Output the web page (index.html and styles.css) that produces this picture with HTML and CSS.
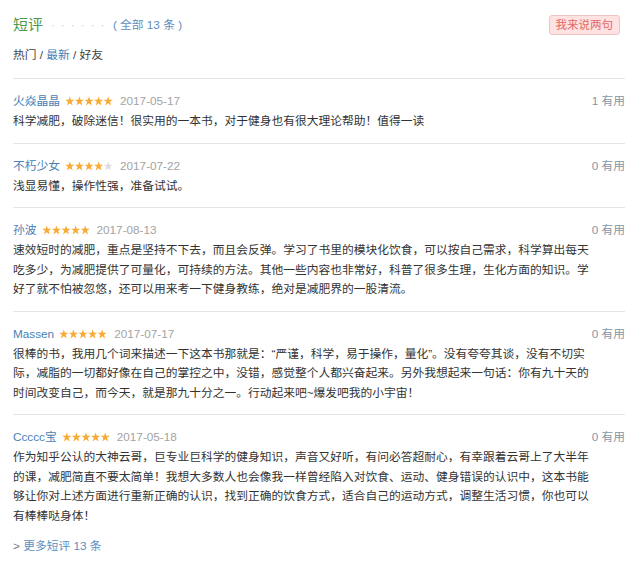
FILE: index.html
```html
<!DOCTYPE html>
<html lang="zh-CN">
<head>
<meta charset="utf-8">
<title>短评</title>
<link rel="stylesheet" href="styles.css">
</head>
<body>
<svg class="defs" width="0" height="0" aria-hidden="true">
  <symbol id="star" viewBox="0 0 10 10">
    <polygon points="5,0.3 6.2,3.7 9.8,3.7 6.9,5.9 8,9.6 5,7.4 2,9.6 3.1,5.9 0.2,3.7 3.8,3.7"/>
  </symbol>
</svg>
<section class="comments">
  <div class="section-head">
    <h2 class="title">短评<span class="dots">· · · · · ·</span><a class="all" href="#">( 全部 13 条 )</a></h2>
    <a class="say" href="#">我来说两句</a>
  </div>
  <div class="tabs"><span class="tab-active">热门</span> / <a href="#">最新</a> / <span>好友</span></div>

  <ul class="list">
    <li class="item">
      <div class="meta">
        <a class="name" href="#">火焱晶晶</a>
        <svg class="stars" viewBox="0 0 48 10"><use href="#star" x="0" width="9.6" height="10"/><use href="#star" x="9.6" width="9.6" height="10"/><use href="#star" x="19.2" width="9.6" height="10"/><use href="#star" x="28.8" width="9.6" height="10"/><use href="#star" x="38.4" width="9.6" height="10"/></svg>
        <span class="date">2017-05-17</span>
        <span class="votes">1 有用</span>
      </div>
      <p class="text">科学减肥，破除迷信！很实用的一本书，对于健身也有很大理论帮助！值得一读</p>
    </li>
    <li class="item">
      <div class="meta">
        <a class="name" href="#">不朽少女</a>
        <svg class="stars" viewBox="0 0 48 10"><use href="#star" x="0" width="9.6" height="10"/><use href="#star" x="9.6" width="9.6" height="10"/><use href="#star" x="19.2" width="9.6" height="10"/><use href="#star" x="28.8" width="9.6" height="10"/><use class="off" href="#star" x="38.4" width="9.6" height="10"/></svg>
        <span class="date">2017-07-22</span>
        <span class="votes">0 有用</span>
      </div>
      <p class="text">浅显易懂，操作性强，准备试试。</p>
    </li>
    <li class="item">
      <div class="meta">
        <a class="name" href="#">孙波</a>
        <svg class="stars" viewBox="0 0 48 10"><use href="#star" x="0" width="9.6" height="10"/><use href="#star" x="9.6" width="9.6" height="10"/><use href="#star" x="19.2" width="9.6" height="10"/><use href="#star" x="28.8" width="9.6" height="10"/><use href="#star" x="38.4" width="9.6" height="10"/></svg>
        <span class="date">2017-08-13</span>
        <span class="votes">0 有用</span>
      </div>
      <p class="text">速效短时的减肥，重点是坚持不下去，而且会反弹。学习了书里的模块化饮食，可以按自己需求，科学算出每天吃多少，为减肥提供了可量化，可持续的方法。其他一些内容也非常好，科普了很多生理，生化方面的知识。学好了就不怕被忽悠，还可以用来考一下健身教练，绝对是减肥界的一股清流。</p>
    </li>
    <li class="item">
      <div class="meta">
        <a class="name" href="#">Massen</a>
        <svg class="stars" viewBox="0 0 48 10"><use href="#star" x="0" width="9.6" height="10"/><use href="#star" x="9.6" width="9.6" height="10"/><use href="#star" x="19.2" width="9.6" height="10"/><use href="#star" x="28.8" width="9.6" height="10"/><use href="#star" x="38.4" width="9.6" height="10"/></svg>
        <span class="date">2017-07-17</span>
        <span class="votes">0 有用</span>
      </div>
      <p class="text">很棒的书，我用几个词来描述一下这本书那就是：“严谨，科学，易于操作，量化”。没有夸夸其谈，没有不切实际，减脂的一切都好像在自己的掌控之中，没错，感觉整个人都兴奋起来。另外我想起来一句话：你有九十天的时间改变自己，而今天，就是那九十分之一。行动起来吧~爆发吧我的小宇宙！</p>
    </li>
    <li class="item">
      <div class="meta">
        <a class="name" href="#">Ccccc宝</a>
        <svg class="stars" viewBox="0 0 48 10"><use href="#star" x="0" width="9.6" height="10"/><use href="#star" x="9.6" width="9.6" height="10"/><use href="#star" x="19.2" width="9.6" height="10"/><use href="#star" x="28.8" width="9.6" height="10"/><use href="#star" x="38.4" width="9.6" height="10"/></svg>
        <span class="date">2017-05-18</span>
        <span class="votes">0 有用</span>
      </div>
      <p class="text">作为知乎公认的大神云哥，巨专业巨科学的健身知识，声音又好听，有问必答超耐心，有幸跟着云哥上了大半年的课，减肥简直不要太简单！我想大多数人也会像我一样曾经陷入对饮食、运动、健身错误的认识中，这本书能够让你对上述方面进行重新正确的认识，找到正确的饮食方式，适合自己的运动方式，调整生活习惯，你也可以有棒棒哒身体！</p>
    </li>
  </ul>

  <p class="more">&gt; <a href="#">更多短评 13 条</a></p>
</section>
</body>
</html>
```

FILE: styles.css
```css
html, body {
  margin: 0;
  padding: 0;
  background: #fff;
}

body {
  font-family: "Liberation Sans", "Noto Sans CJK SC", sans-serif;
  font-size: 11.75px;
  color: #333;
}

a {
  text-decoration: none;
  color: #3f7fb8;
}

.defs {
  position: absolute;
  width: 0;
  height: 0;
  overflow: hidden;
}

.comments {
  padding: 0 15px 0 13px;
}

.section-head {
  display: flex;
  align-items: center;
  justify-content: space-between;
  padding-top: 15px;
  height: 20px;
}

.title {
  margin: 0;
  font-size: 15px;
  font-weight: normal;
  line-height: 20px;
  color: #4a9a4e;
  display: flex;
  align-items: center;
}

.dots {
  font-size: 11px;
  color: #c4c4c4;
  margin-left: 8px;
  letter-spacing: 1.6px;
}

.all {
  font-size: 11.75px;
  margin-left: 7px;
  color: #5c8fc0;
}

.say {
  display: block;
  margin-right: 5px;
  height: 18px;
  line-height: 18px;
  padding: 0 6px;
  font-size: 11.5px;
  color: #e06a6a;
  background: #ffe2e2;
  border: 1px solid #f2c3c3;
  border-radius: 3px;
}

.tabs {
  margin-top: 10px;
  line-height: 20px;
  color: #444;
  padding-bottom: 13px;
  border-bottom: 1px solid #e6e6e6;
}

.tabs a {
  color: #3f7fb8;
}

.list {
  list-style: none;
  margin: 0;
  padding: 0;
}

.item {
  padding: 12px 0 12px;
  border-bottom: 1px solid #e6e6e6;
}

.item:last-child {
  border-bottom: none;
  padding-bottom: 11px;
}

.meta {
  display: flex;
  align-items: center;
  height: 20px;
  line-height: 20px;
}

.name {
  color: #4a80b6;
}

.stars {
  width: 48px;
  height: 10px;
  margin-left: 5px;
  fill: #f7ab32;
}

.stars .off {
  fill: #dedede;
}

.date {
  margin-left: 7px;
  color: #a3a3a3;
}

.votes {
  margin-left: auto;
  color: #8497a8;
}

.text {
  margin: 0;
  max-width: 580px;
  line-height: 19.5px;
  color: #333;
}

.more {
  margin: 0;
  line-height: 20px;
  color: #777;
}

.more a {
  color: #5c8fc0;
}
```
